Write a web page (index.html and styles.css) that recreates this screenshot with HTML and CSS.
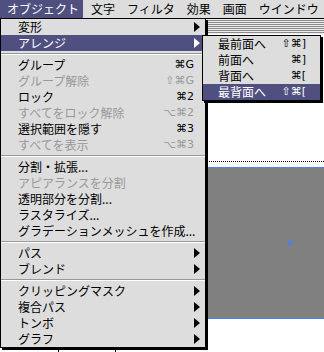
FILE: index.html
```html
<!DOCTYPE html>
<html>
<head>
	<meta charset="utf-8">
	<title>オブジェクト</title>
	<link rel="stylesheet" href="styles.css">
</head>
<body>
	<div class="menubar">
		<span class="title active">オブジェクト</span>
		<span class="title">文字</span>
		<span class="title">フィルタ</span>
		<span class="title">効果</span>
		<span class="title">画面</span>
		<span class="title">ウインドウ</span>
	</div>

	<div class="desk">
		<div class="doc">
			<div class="doc-titlebar"></div>
			<div class="doc-body">
				<div class="guide"></div>
				<div class="shape"><span class="anchor"></span></div>
				<div class="ticks"><i></i><i></i></div>
			</div>
		</div>

		<ul class="menu">
			<li class="item"><span class="label">変形</span><span class="arrow"></span></li>
			<li class="item on"><span class="label">アレンジ</span><span class="arrow"></span>
				<ul class="menu sub">
					<li class="item"><span class="label">最前面へ</span><span class="key">⇧⌘]</span></li>
					<li class="item"><span class="label">前面へ</span><span class="key">⌘]</span></li>
					<li class="item"><span class="label">背面へ</span><span class="key">⌘[</span></li>
					<li class="item on"><span class="label">最背面へ</span><span class="key">⇧⌘[</span></li>
				</ul>
			</li>
			<li class="sep"></li>
			<li class="item"><span class="label">グループ</span><span class="key">⌘G</span></li>
			<li class="item off"><span class="label">グループ解除</span><span class="key">⇧⌘G</span></li>
			<li class="item"><span class="label">ロック</span><span class="key">⌘2</span></li>
			<li class="item off"><span class="label">すべてをロック解除</span><span class="key">⌥⌘2</span></li>
			<li class="item"><span class="label">選択範囲を隠す</span><span class="key">⌘3</span></li>
			<li class="item off"><span class="label">すべてを表示</span><span class="key">⌥⌘3</span></li>
			<li class="sep"></li>
			<li class="item"><span class="label">分割・拡張...</span></li>
			<li class="item off"><span class="label">アピアランスを分割</span></li>
			<li class="item"><span class="label">透明部分を分割...</span></li>
			<li class="item"><span class="label">ラスタライズ...</span></li>
			<li class="item"><span class="label">グラデーションメッシュを作成...</span></li>
			<li class="sep"></li>
			<li class="item"><span class="label">パス</span><span class="arrow"></span></li>
			<li class="item"><span class="label">ブレンド</span><span class="arrow"></span></li>
			<li class="sep"></li>
			<li class="item"><span class="label">クリッピングマスク</span><span class="arrow"></span></li>
			<li class="item"><span class="label">複合パス</span><span class="arrow"></span></li>
			<li class="item"><span class="label">トンボ</span><span class="arrow"></span></li>
			<li class="item"><span class="label">グラフ</span><span class="arrow"></span></li>
		</ul>
	</div>
</body>
</html>
```

FILE: styles.css
```css
body {
	margin: 0;
	background: #fff;
	font-family: "Noto Sans CJK JP", sans-serif;
	font-size: 12px;
	color: #000;
}

/* menu bar */
.menubar {
	display: flex;
	height: 18px;
	line-height: 18px;
	background: #ddd;
	border-bottom: 1px solid #000;
	white-space: nowrap;
	overflow: hidden;
}
.title { padding: 0 4px 0 8px; }
.title.active { padding-left: 7px; background: #505080; color: #fff; }

/* document window behind the menu */
.desk { position: relative; }
.doc-titlebar {
	height: 15px;
	background: repeating-linear-gradient(to bottom, #eee 0 1px, #8a8a8a 1px 2px);
}
.doc-body { background: #fff; }
.guide {
	margin-top: 127px;
	border-top: 1px dotted #000;
}
.shape {
	position: relative;
	margin-top: 5px;
	height: 150px;
	background: #808080;
	border-top: 1px solid #4a80ff;
	border-bottom: 1px solid #4a80ff;
}
.anchor {
	position: absolute;
	left: 288px; top: 73px;
	width: 4px; height: 4px;
	background: #4a80ff;
}
.ticks {
	display: flex;
	height: 3px;
	margin-top: 31px;
}
.ticks i { width: 1px; background: #000; margin-left: 58px; }
.ticks i + i { margin-left: 56px; }

/* pull-down menu */
.menu {
	position: absolute;
	left: 0; top: -1px;
	width: 204px;
	margin: 0; padding: 0;
	list-style: none;
	background: #ddd;
	border: 1px solid #000;
	box-shadow: 2px 2px 0 #000;
}
.item {
	position: relative;
	display: flex;
	align-items: center;
	height: 16px;
	line-height: 16px;
	padding: 0 5px 0 17px;
	white-space: nowrap;
}
.label { flex: 1; }
.key {
	margin-right: 6px;
	font-family: "DejaVu Sans", "Noto Sans CJK JP", sans-serif;
	font-size: 11px;
}
.arrow {
	width: 0; height: 0;
	border-left: 6px solid #000;
	border-top: 5px solid transparent;
	border-bottom: 5px solid transparent;
}
.item.on { background: #505080; color: #fff; }
.item.on > .arrow { border-left-color: #fff; }
.item.off { color: #999; }
.sep {
	box-sizing: border-box;
	height: 6px;
	padding-top: 2px;
}
.sep::after {
	content: "";
	display: block;
	border-top: 1px solid #999;
	border-bottom: 1px solid #fff;
}

/* submenu of アレンジ */
.sub {
	left: 201px; top: 0;
	width: 117px;
	color: #000;
	z-index: 2;
}
.sub .item { padding: 0 14px 0 15px; }
.sub .key { margin-right: 0; }
```
